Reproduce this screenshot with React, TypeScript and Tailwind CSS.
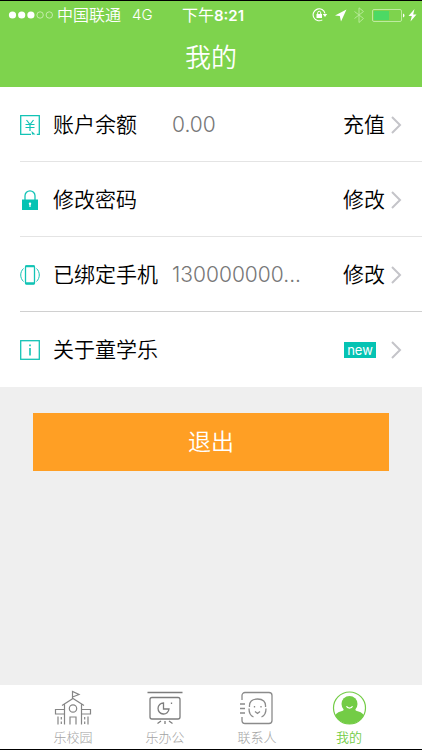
import type { ReactNode } from 'react';

const CJK = "font-['Liberation_Sans','Noto_Sans_CJK_SC',sans-serif]";

function Chevron() {
  return (
    <svg className="h-5 w-3 shrink-0" viewBox="0 0 12 20" fill="none" stroke="#c4c4c9" strokeWidth="2" aria-hidden="true">
      <path d="M2 2l8 8-8 8" />
    </svg>
  );
}

function YenIcon() {
  return (
    <svg className="size-5" viewBox="0 0 20 20" fill="none" stroke="#12c3b5" strokeWidth="1.3" aria-hidden="true">
      <path d="M11 19.3H.7V.7h18.6v18.6h-2.5" />
      <path d="M6.500 5L10 9.500 13.500 5M5.500 9.500h9M5.500 12.500h9M10 9.500v6.500" strokeWidth="1.200" />
      <path d="M11.500 16l4 3.500h-3.500z" fill="#12c3b5" stroke="none" />
    </svg>
  );
}

function LockIcon() {
  return (
    <svg className="size-5" viewBox="0 0 20 20" fill="none" aria-hidden="true">
      <path d="M5 10V5.800a5 5 0 0 1 10 0V10" stroke="#12c3b5" strokeWidth="1.300" />
      <path d="M2 9.500h16V20H2z" fill="#05c3b3" />
      <circle cx="10" cy="13.800" r="1.200" fill="#fff" />
      <path d="M9.400 14h1.200v3H9.400z" fill="#fff" />
    </svg>
  );
}

function PhoneIcon() {
  return (
    <svg className="size-5" viewBox="0 0 20 20" fill="none" stroke="#12c3b5" aria-hidden="true">
      <rect x="5.500" y="1" width="9" height="18" rx="1" strokeWidth="1.300" />
      <path d="M5.500 1.300h9M5.500 18.300h9" strokeWidth="2" />
      <path d="M3.500 3.500C-.2 7-.2 13 3.500 16.500M16.500 3.500c3.700 3.500 3.700 9.500 0 13" strokeWidth="1" />
    </svg>
  );
}

function InfoIcon() {
  return (
    <svg className="size-5" viewBox="0 0 20 20" fill="none" stroke="#12c3b5" strokeWidth="1.300" aria-hidden="true">
      <rect x=".7" y=".7" width="18.600" height="18.600" />
      <path d="M10 8v7.500M10 4.500v1.800" strokeWidth="1.600" />
    </svg>
  );
}

function SchoolIcon() {
  return (
    <svg className="h-9 w-10" viewBox="0 0 40 36" fill="none" stroke="#858585" strokeWidth="1.200" aria-hidden="true">
      <path d="M19.500 8.500V1.500l6.500 3-6.500 2.500M9 15.500L20 8.500l11 7M11.500 14.500V34.500M28.500 14.500V34.500" />
      <circle cx="20" cy="18.500" r="3.700" />
      <path d="M11.500 19.500h-9v4.500h9M28.500 19.500h9v4.500h-9" />
      <path d="M17 34.500v-7.500h6v7.500M5 26.500v8M35 26.500v8" />
      <path d="M8.300 27v2.500M8.300 31.500v2.500M31.700 27v2.500M31.700 31.500v2.500" />
    </svg>
  );
}

function BoardIcon() {
  return (
    <svg className="h-9 w-10" viewBox="0 0 40 36" fill="none" stroke="#7d7d7d" strokeWidth="1.300" aria-hidden="true">
      <path d="M2.500 2.500h35" />
      <rect x="5" y="7.500" width="30" height="21.500" rx="2" />
      <path d="M18.500 13a5.500 5.500 0 1 0 5.500 6h-5.500z" />
      <path d="M26.500 12.500v1.500" />
      <path d="M16 31l-3.500 2.500M20 31v3M24 31l3.500 2.500" />
    </svg>
  );
}

function ContactsIcon() {
  return (
    <svg className="h-9 w-10" viewBox="0 0 40 36" fill="none" stroke="#8b8b8b" strokeWidth="1.300" aria-hidden="true">
      <path d="M5 10V5.500a3 3 0 0 1 3-3h24a3 3 0 0 1 3 3v25a3 3 0 0 1-3 3H8a3 3 0 0 1-3-3V27" />
      <path d="M3 14h5M3 18.500h5M3 23h5" />
      <path d="M12.500 17C12 11.500 15 9 20.500 9s8.500 2.500 8 8M12 18.500c0 4 2 7.500 4.500 8.500M29 18.500c0 4-2 7.500-4.500 8.500" />
      <path d="M17.500 16v1.500M24 16v1.500M18 21.500l2.500 2 2.500-2" />
    </svg>
  );
}

function ProfileIcon() {
  return (
    <svg className="h-9 w-10" viewBox="0 0 40 36" fill="none" aria-hidden="true">
      <clipPath id="profile-disc">
        <circle cx="20.500" cy="18" r="16" />
      </clipPath>
      <circle cx="20.500" cy="18" r="16" stroke="#73cc46" strokeWidth="1.200" />
      <g clipPath="url(#profile-disc)" fill="#73cc46">
        <circle cx="20.500" cy="14" r="8" />
        <path d="M15 18h11c0 2.500 1 3 3.500 3.500 3 .8 5.500 3 7.500 6.500v8H4v-8c2-3.500 4.500-5.700 7.500-6.500C14 21 15 20.500 15 18z" />
      </g>
      <path d="M17.500 16.300c1 2.300 5 2.300 6 0" stroke="#fff" strokeWidth="1.200" />
    </svg>
  );
}

function StatusIcons() {
  return (
    <svg className="h-4 w-[106px]" viewBox="0 0 106 16" fill="none" stroke="#fff" aria-hidden="true">
      <path d="M10.300 12.900A6 6 0 1 1 13 6.500" strokeWidth="1.100" />
      <path d="M10.800 7h4.400l-2.200 3z" fill="#fff" stroke="none" />
      <rect x="4.500" y="7" width="5.500" height="4" fill="#fff" stroke="none" />
      <path d="M5.700 7V5.800a1.500 1.500 0 0 1 3 0V7" />
      <path d="M23 8.500L34.500 2.500l-5.500 12-1.200-5.500z" fill="#fff" stroke="none" />
      <path d="M42.500 4.500l9 7-4.500 4V.8l4.500 3.700-9 7" stroke="#b6e997" />
      <rect x="60.500" y="2.500" width="29" height="12" rx="1.500" stroke="#bdeba0" />
      <rect x="62" y="4" width="15" height="9" fill="#4cd964" stroke="none" />
      <path d="M91 6.500v4c2-.8 2-3.200 0-4z" fill="#fff" stroke="none" />
      <path d="M102.500 2l-6 7h3.300l-1.300 5.500 6-7h-3.300z" fill="#fff" stroke="none" />
    </svg>
  );
}

function StatusBar() {
  return (
    <div className="grid h-7 grid-cols-[1fr_auto_1fr] items-center pr-1 pl-2 text-base">
      <div className="flex items-center gap-[3px]">
        <svg className="h-2 w-[46px]" viewBox="0 0 46 8" fill="#fff" aria-hidden="true">
          <circle cx="4.500" cy="4" r="3.600" />
          <circle cx="13.700" cy="4" r="3.600" />
          <circle cx="22.900" cy="4" r="3.600" />
          <circle cx="32.100" cy="4" r="3.200" fill="none" stroke="#d5f2c3" strokeWidth=".8" />
          <circle cx="41.300" cy="4" r="3.200" fill="none" stroke="#d5f2c3" strokeWidth=".8" />
        </svg>
        <span className="pt-0.5 leading-6 font-[350]">中国联通</span>
        <span className="ml-2 font-['Inter',sans-serif] text-[15px] font-light">4G</span>
      </div>
      <time className="font-['Inter','Noto_Sans_CJK_SC',sans-serif] text-[15px] font-semibold">
        <span className="text-base font-normal">下午</span>8:21
      </time>
      <div className="flex justify-end">
        <StatusIcons />
      </div>
    </div>
  );
}

type RowProps = {
  icon: ReactNode;
  label: string;
  value?: string;
  action?: string;
  isNew?: boolean;
};

function Row({ icon, label, value, action, isNew = false }: RowProps) {
  return (
    <li className="ml-5 border-b border-[#e4e4e4] last:border-b-0 nth-3:border-[#d0d0d0]">
      <button
        type="button"
        className="flex h-[74px] w-full items-center pt-0.5 pr-5 text-left text-[21px] font-[350] text-black"
      >
        {icon}
        <span className="ml-[13px] w-[119px] shrink-0">{label}</span>
        <span className="min-w-0 flex-1 font-['Inter',sans-serif] font-light text-[#777]">{value}</span>
        {action && <span className="w-[47px] shrink-0">{action}</span>}
        {isNew && (
          <span className="mr-[14px] w-8 shrink-0 bg-[#05c3b3] text-center font-['Inter',sans-serif] text-[13px] leading-4 font-normal text-white">
            new
          </span>
        )}
        <Chevron />
      </button>
    </li>
  );
}

function Tab({ icon, label, active = false }: { icon: ReactNode; label: string; active?: boolean }) {
  return (
    <a
      href="#"
      aria-current={active ? 'page' : undefined}
      className={`flex w-[92px] flex-col items-center gap-0.5 pt-[5px] text-[13px] leading-5 ${active ? 'font-[350] text-[#73cc46]' : 'font-light text-[#a3a3a3]'}`}
    >
      {icon}
      {label}
    </a>
  );
}

export default function App() {
  return (
    <div className={`flex min-h-screen flex-col border-y border-black bg-[#efefef] ${CJK}`}>
      <header className="bg-[#7ed34d] text-white">
        <StatusBar />
        <h1 className="h-[58px] text-center text-[26px] leading-[58px] font-[350]">我的</h1>
      </header>
      <main className="flex-1">
        <ul className="bg-white pb-px">
          <Row icon={<YenIcon />} label="账户余额" value="0.00" action="充值" />
          <Row icon={<LockIcon />} label="修改密码" action="修改" />
          <Row icon={<PhoneIcon />} label="已绑定手机" value="130000000..." action="修改" />
          <Row icon={<InfoIcon />} label="关于童学乐" isNew />
        </ul>
        <div className="px-[33px] pt-[26px]">
          <button type="button" className="h-[58px] w-full bg-[#ff9f24] text-[23px] font-[350] text-white">
            退出
          </button>
        </div>
      </main>
      <nav className="flex h-16 justify-center bg-white">
        <Tab icon={<SchoolIcon />} label="乐校园" />
        <Tab icon={<BoardIcon />} label="乐办公" />
        <Tab icon={<ContactsIcon />} label="联系人" />
        <Tab icon={<ProfileIcon />} label="我的" active />
      </nav>
    </div>
  );
}
